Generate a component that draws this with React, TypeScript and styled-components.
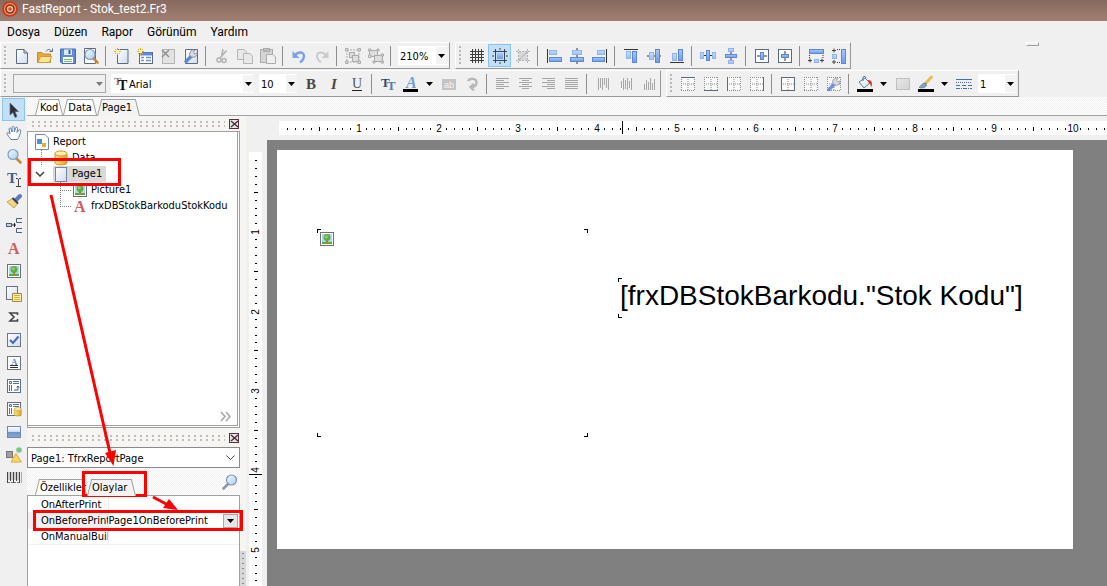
import React from "react";
import styled, { createGlobalStyle, css } from "styled-components";

const UI = `"DejaVu Sans Condensed", "Noto Sans", sans-serif`;

const Global = createGlobalStyle`
  * { box-sizing: border-box; }
  body { margin: 0; background: #f0f0f0; }
  button, select, input { font: inherit; color: inherit; margin: 0; padding: 0; border: 0; background: none; border-radius: 0; }
  svg { display: block; flex: none; }
`;

const dither = css`
  background: repeating-conic-gradient(#ffffff 0 25%, #f0f0f0 0 50%) 0 0 / 2px 2px;
`;

const Window = styled.div`
  position: relative;
  min-height: 100vh;
  display: flex;
  flex-direction: column;
  overflow: hidden;
  background: #f0f0f0;
  color: #000;
  font: 11px/16px ${UI};
`;

const TitleBar = styled.header`
  height: 21px;
  padding: 0 2px 4px;
  display: flex;
  align-items: center;
  gap: 4px;
  background: linear-gradient(#866a5d, #a18072);
  color: #fff;
  font: 12px/16px Roboto, sans-serif;
  white-space: nowrap;
`;

const MenuBar = styled.nav`
  height: 21px;
  padding: 0 7px;
  display: flex;
  align-items: center;
  gap: 14px;
  font: 12px/16px Roboto, sans-serif;
`;

const ToolRows = styled.div`
  display: flex;
  flex-direction: column;
  gap: 1px;
`;

const ToolRow = styled.div`
  display: flex;
  align-items: flex-start;
  gap: 5px;
`;

const Toolbar = styled.div`
  height: 27px;
  display: flex;
  align-items: center;
  border: 1px solid #fff;
  border-right-color: #989898;
  border-bottom-color: #989898;
`;

const Grip = styled.span`
  width: 9px;
  height: 21px;
  background: radial-gradient(circle, #b8b8b8 1px, transparent 1px) 2px 0 / 4px 4px no-repeat;
  background-repeat: repeat-y;
`;

const StubBar = styled.div`
  width: 13px;
  height: 4px;
  margin-left: 170px;
  border: 1px solid #fff;
  border-right-color: #a0a0a0;
  border-bottom-color: #a0a0a0;
`;

const ToolButton = styled.button<{ $active?: boolean; $narrow?: boolean }>`
  width: ${(p) => (p.$narrow ? 15 : 23)}px;
  height: 23px;
  flex: none;
  display: flex;
  align-items: center;
  justify-content: center;
  ${(p) => p.$active && css`background: #c1dff5; border: 1px solid #8ac4ee;`}
`;

const Separator = styled.span`
  width: 8px;
  height: 20px;
  flex: none;
  background: linear-gradient(90deg, transparent 3px, #8c8c8c 3px 4px, transparent 4px);
`;

const Combo = styled.label<{ $w: number; $disabled?: boolean }>`
  width: ${(p) => p.$w}px;
  height: 19px;
  flex: none;
  margin: 0 2px 0 3px;
  padding-left: 2px;
  display: flex;
  align-items: center;
  background: ${(p) => (p.$disabled ? "#f0f0f0" : "#fff")};
  border: ${(p) => (p.$disabled ? "1px solid #a8a8a8" : "0")};
`;

const ComboField = styled.span`
  flex: 1;
  display: grid;
  align-items: center;
  & > * { grid-area: 1 / 1; }
`;

const Select = styled.select`
  appearance: none;
  width: 100%;
  height: 18px;
  padding-top: 2px;
  outline: none;
`;

const ComboArrow = styled.span<{ $plain?: boolean }>`
  width: 11px;
  height: 17px;
  justify-self: end;
  display: flex;
  align-items: center;
  justify-content: center;
  pointer-events: none;
  background: ${(p) => (p.$plain ? "transparent" : "#f3f3f3")};
`;

const Body = styled.div`
  flex: 1;
  display: flex;
  min-height: 0;
`;

const ToolStrip = styled.div`
  width: 27px;
  flex: none;
  padding: 1px 2px;
  display: flex;
  flex-direction: column;
`;

const Main = styled.div`
  flex: 1;
  min-width: 0;
  display: flex;
  flex-direction: column;
`;

const TabBar = styled.div<{ $tall?: boolean }>`
  height: ${(p) => (p.$tall ? 28 : 19)}px;
  flex: none;
  padding: 0 2px 0 8px;
  display: flex;
  align-items: flex-end;
  border-bottom: 1px solid #a0a0a0;
  ${dither}
`;

const Tab = styled.button<{ $active?: boolean; $w?: number }>`
  position: relative;
  isolation: isolate;
  width: ${(p) => (p.$w ? `${p.$w}px` : "auto")};
  height: 17px;
  margin-bottom: -1px;
  padding: 0 ${(p) => (p.$active ? 8 : 5)}px 0 5px;
  line-height: 18px;
  text-align: left;
  white-space: nowrap;
  z-index: ${(p) => (p.$active ? 1 : 0)};
  &::before, &::after {
    content: "";
    position: absolute;
    z-index: -1;
    top: 0;
    bottom: ${(p) => (p.$active ? 0 : 1)}px;
    background: ${(p) => (p.$active ? "#f3f3f3" : "#fff")};
    border-top: 1px solid #a0a0a0;
  }
  &::before {
    left: 0;
    right: 30%;
    border-left: 1px solid #a0a0a0;
    transform-origin: bottom left;
    transform: skewX(-14deg);
  }
  &::after {
    left: 30%;
    right: 0;
    border-right: 1px solid #a0a0a0;
    transform-origin: bottom right;
    transform: skewX(14deg);
  }
`;

const Spacer = styled.span`
  flex: 1;
`;

const Columns = styled.div`
  flex: 1;
  display: flex;
  min-height: 0;
`;

const SidePanel = styled.aside`
  width: 213px;
  flex: none;
  display: flex;
  flex-direction: column;
  background: #f7f5f1;
`;

const DockCaption = styled.div<{ $tall?: boolean }>`
  height: ${(p) => (p.$tall ? 19 : 15)}px;
  flex: none;
  padding: 1px 0 0 3px;
  display: flex;
  align-items: center;
  gap: 4px;
`;

const DockGrip = styled.span`
  flex: 1;
  height: 8px;
  background: radial-gradient(circle, #bdbdbd 1px, transparent 1px) 0 0 / 6px 4px;
`;

const CloseButton = styled.button`
  width: 11px;
  height: 10px;
`;

const TreeBox = styled.div`
  flex: 1;
  display: flex;
  flex-direction: column;
  background: #fff;
  border: 1px solid #a0a0a0;
  border-right: 3px double #a0a0a0;
  border-bottom: 3px double #a0a0a0;
`;

const TreeList = styled.ul`
  flex: 1;
  margin: 0;
  padding: 2px 0 0;
  list-style: none;
`;

const TreeRow = styled.li<{ $indent: number }>`
  height: 16px;
  padding-left: ${(p) => p.$indent}px;
  display: flex;
  align-items: center;
  white-space: nowrap;
`;

const TreeLabel = styled.span<{ $selected?: boolean }>`
  display: flex;
  align-items: center;
  gap: 3px;
  padding-right: 4px;
  background: ${(p) => (p.$selected ? "#d9d9d9" : "transparent")};
`;

const Branch = styled.span<{ $last?: boolean }>`
  width: 12px;
  height: 16px;
  flex: none;
  background:
    linear-gradient(90deg, #808080 1px, transparent 1px) 0 8px / 2px 1px repeat-x,
    linear-gradient(#808080 1px, transparent 1px) 0 0 / 1px 2px repeat-y;
  clip-path: ${(p) => (p.$last ? "inset(0 0 7px 0)" : "none")};
`;

const Expander = styled.button`
  width: 18px;
  height: 16px;
  display: flex;
  align-items: center;
`;

const MoreButton = styled.button`
  align-self: flex-end;
  margin: 0 6px 3px 0;
`;

const ObjectPicker = styled.label`
  height: 21px;
  flex: none;
  padding: 0 3px;
  display: flex;
  background: #fff;
  border: 1px solid #8a8a8a;
`;

const SearchButton = styled.button`
  align-self: center;
`;

const PropertyBox = styled.div`
  height: 90px;
  flex: none;
  padding-top: 1px;
  background: #fff;
  border-left: 1px solid #a0a0a0;
  border-right: 1px solid #a0a0a0;
`;

const PropertyTable = styled.table`
  width: 100%;
  table-layout: fixed;
  border-collapse: collapse;
`;

const PropertyRow = styled.tr<{ $selected?: boolean }>`
  height: 16px;
  box-shadow: inset 0 -1px #f0f0f0;
  & > th { background: ${(p) => (p.$selected ? "#f0f0f0" : "transparent")}; }
`;

const PropertyName = styled.th`
  width: 80px;
  height: 16px;
  padding: 0 0 0 13px;
  border-right: 1px solid #ececec;
  font-weight: normal;
  text-align: left;
  line-height: 16px;
  white-space: nowrap;
  overflow: hidden;
`;

const PropertyValue = styled.td`
  height: 16px;
  padding: 0 1px 0 0;
`;

const ValueEditor = styled.div`
  display: flex;
  height: 16px;
  align-items: center;
`;

const ValueInput = styled.input`
  flex: 1;
  min-width: 0;
  height: 16px;
  outline: none;
`;

const ValueDrop = styled.button`
  width: 15px;
  height: 14px;
  display: flex;
  align-items: center;
  justify-content: center;
  background: #e6e6e6;
  border: 1px solid #a8a8a8;
`;

const Splitter = styled.div`
  width: 6px;
  flex: none;
  display: flex;
  align-items: flex-end;
  background: #f7f5f1;
`;

const SplitterHandle = styled.div`
  width: 6px;
  height: 35px;
  background: radial-gradient(circle, #8a8a8a 1px, transparent 1px) 0 0 / 6px 5px, #d8d8d8;
`;

const Workspace = styled.div`
  flex: 1;
  min-width: 0;
  display: grid;
  grid-template-columns: 21px 1fr;
  grid-template-rows: 24px 1fr;
`;

const TopRuler = styled.div`
  grid-column: 1 / 3;
  padding: 5px 0 0 33px;
`;

const SideRuler = styled.div`
  padding: 12px 5px 0 3px;
`;

const RulerSvg = styled.svg`
  background: #fff;
  overflow: hidden;
  font: 10px "Liberation Sans", sans-serif;
`;

const Desk = styled.div`
  min-width: 0;
  padding: 10px 10px 37px;
  overflow: hidden;
  background: #808080;
`;

const Paper = styled.div`
  position: relative;
  width: 796px;
  height: 399px;
  background: #fff;
`;

const leftCorners = `
  linear-gradient(#000 0 0) 0 0 / 4px 1px no-repeat, linear-gradient(#000 0 0) 0 0 / 1px 4px no-repeat,
  linear-gradient(#000 0 0) 0 100% / 4px 1px no-repeat, linear-gradient(#000 0 0) 0 100% / 1px 4px no-repeat`;
const rightCorners = `
  linear-gradient(#000 0 0) 100% 0 / 4px 1px no-repeat, linear-gradient(#000 0 0) 100% 0 / 1px 4px no-repeat,
  linear-gradient(#000 0 0) 100% 100% / 4px 1px no-repeat, linear-gradient(#000 0 0) 100% 100% / 1px 4px no-repeat`;

const ReportObject = styled.div<{ $x: number; $y: number; $w: number; $h: number; $openRight?: boolean }>`
  position: absolute;
  left: ${(p) => p.$x}px;
  top: ${(p) => p.$y}px;
  width: ${(p) => p.$w}px;
  height: ${(p) => p.$h}px;
  padding: 2px;
  background: ${(p) => (p.$openRight ? leftCorners : `${leftCorners}, ${rightCorners}`)};
  font: 28px/32px "Liberation Sans", Arial, sans-serif;
  white-space: nowrap;
`;

const Markup = styled.svg`
  position: absolute;
  left: 0;
  top: 0;
  pointer-events: none;
`;

const HiddenDefs = styled.svg`
  position: absolute;
`;

const navy = "#5a6b80";
const gray = "#a6a6a6";

const dots = (
  <g>
    <rect x="1" y="1" width="14" height="14" fill="#fafafa" />
    <path d="M1 1.500H15M1 14.500H15M1.500 1V15M14.500 1V15M8 3V14M3 8H14" stroke="#8a8a8a" strokeDasharray="1 1" fill="none" />
  </g>
);
const paper = (
  <path d="M3.500 1.500H14V15.500H3.500Z" fill="url(#paper)" stroke={navy} />
);
const spark = (
  <g stroke="#e3b21c" strokeWidth="1">
    <path d="M3.500 0V7M0 3.500H7M1 1L6 6M6 1L1 6" />
    <rect x="2" y="2" width="3" height="3" fill="#fff3a0" stroke="none" />
  </g>
);
const wrench = (
  <g>
    <path d="M3 13.500L9 7.500" stroke="#5f86d8" strokeWidth="3.400" strokeLinecap="round" />
    <path d="M7.500 8.500A4 4 0 0 1 12 2.200L10.500 4.500L12 6L14.200 4.600A4 4 0 0 1 8.800 9Z" fill="#d5d9de" stroke="#7b8796" strokeWidth=".8" />
  </g>
);
const picture = (
  <g>
    <rect x="1.500" y="1.500" width="13" height="13" fill="#fff" stroke="#707070" />
    <rect x="3" y="3" width="10" height="10" fill="#a9d4f2" />
    <rect x="3" y="11" width="10" height="2" fill="#5faa3c" />
    <path d="M8 8V12" stroke="#b5793a" strokeWidth="2" />
    <circle cx="8" cy="6.500" r="3.400" fill="#5dad42" />
    <circle cx="7.300" cy="5.800" r="1.600" fill="#8fd068" />
  </g>
);
const lens = (
  <g>
    <path d="M10.500 10.500L14.500 14.500" stroke="#c8873f" strokeWidth="2.600" strokeLinecap="round" />
    <circle cx="7" cy="6.500" r="5" fill="url(#glass)" stroke="#7f9bc0" strokeWidth="1.200" />
  </g>
);
const glyphT = (x: number, y: number, size: number, fill: string, t: string, extra: object = {}) => (
  <text x={x} y={y} fontSize={size} fill={fill} fontFamily="Liberation Serif, serif" fontWeight="bold" {...extra}>{t}</text>
);
const lines = (ends: [number, number][]) => (
  <path d={ends.map(([a, b], i) => `M${a} ${2.5 + i * 2}H${b}`).join("")} stroke={gray} />
);
const vbars = (ends: [number, number][]) => (
  <path d={ends.map(([a, b], i) => `M${3.5 + i * 2} ${a}V${b}`).join("")} stroke={gray} />
);
const boxes = (list: number[][]) =>
  list.map((b, i) => (
    <rect key={i} x={b[0] + 0.5} y={b[1] + 0.5} width={b[2] - 1} height={b[3] - 1}
      fill={b[4] ? "url(#blueDark)" : "url(#blueLight)"} stroke={b[4] ? "#5b87d6" : "#8fb3ee"} />
  ));

const icons: Record<string, React.ReactNode> = {
  logo: (
    <g>
      <circle cx="8" cy="8" r="7.800" fill="#c9391a" />
      <circle cx="8" cy="8" r="6" fill="#f0a070" />
      <circle cx="8" cy="8" r="4.800" fill="#8d2b16" />
      <circle cx="8" cy="8" r="3.200" fill="#f3b896" />
      <circle cx="8" cy="8" r="1.800" fill="#d7502a" />
    </g>
  ),
  fresh: <path d="M2.500 1.500H10L13.500 5V15.500H2.500ZM10 1.500V5H13.500" fill="url(#paper)" stroke={navy} />,
  open: (
    <g>
      <path d="M.5 4.500H5L6.500 6H13.500V14.500H.5Z" fill="#e8a93c" stroke="#c98a2b" />
      <path d="M3.500 8.500H14.500L12.500 14.500H1Z" fill="#fde596" stroke="#d59a33" />
      <path d="M9 3.500C11 .5 13.500 1 14.500 3.500M12.500 3.500H15.500V.5" fill="none" stroke="#54708f" />
    </g>
  ),
  save: (
    <g>
      <path d="M.5 1H15.500V15.500H2L.5 14Z" fill="#5b8ddb" stroke="#3f6db5" />
      <rect x="4" y="1.500" width="8" height="5.500" fill="#dfeafa" />
      <path d="M9.500 2V6" stroke="#3564ad" strokeWidth="2" />
      <rect x="3" y="9" width="10" height="6" fill="#fff" />
      <path d="M4 11.500H12M4 13.500H12" stroke="#7fbf5a" />
    </g>
  ),
  preview: <g><path d="M1.500 .5H12.500V15.500H1.500Z" fill="#fff" stroke={navy} />{lens}</g>,
  newPage: <g>{paper}{spark}</g>,
  newDialog: (
    <g>
      <rect x="2.500" y="4.500" width="13" height="11" fill="#fff" stroke={navy} />
      <path d="M3 6H15" stroke="#5b8be0" strokeWidth="3" />
      <path d="M4 9.500H7M4 12.500H7M9 9.500H14M9 12.500H14" stroke="#6e92c8" strokeWidth="1.400" />
      {spark}
    </g>
  ),
  deletePage: (
    <g>
      <rect x="2.500" y="1.500" width="12" height="14" fill="#e2e2e2" stroke="#b5b5b5" />
      <path d="M2 2L9 9M9 2L2 9" stroke="#8c8c8c" strokeWidth="1.400" />
    </g>
  ),
  pageSettings: <g><path d="M2.500 1.500H14.500V15.500H2.500Z" fill="url(#paper)" stroke={navy} />{wrench}</g>,
  cut: (
    <g stroke="#b0b0b0" fill="none" strokeWidth="1.500">
      <path d="M9 1L7.500 9M12.500 2.500L6 10" /><circle cx="5" cy="12" r="2" /><circle cx="10" cy="12.500" r="2" />
    </g>
  ),
  copy: (
    <g fill="#e8e8e8" stroke="#b5b5b5">
      <path d="M.5 1.500H7L9.500 4V11.500H.5Z" /><path d="M6.500 5.500H13L15.500 8V15.500H6.500Z" />
    </g>
  ),
  paste: (
    <g stroke="#acacac">
      <rect x=".5" y="1.500" width="12" height="13" fill="#d4d4d4" /><rect x="3.500" y=".5" width="6" height="3" fill="#bbb" />
      <path d="M6.500 6.500H13L15.500 9V15.500H6.500Z" fill="#efefef" />
    </g>
  ),
  undo: (
    <g>
      <path d="M4 7.500C6 4 13 3 13 8C13 11 11 13 9 14.500" fill="none" stroke="#7ba2e6" strokeWidth="2.400" />
      <path d="M1.500 3V10H8.500Z" fill="#7ba2e6" />
    </g>
  ),
  redo: (
    <g>
      <path d="M12 7.500C10 4 3 3 3 8C3 11 5 13 7 14.500" fill="none" stroke="#cbcbcb" strokeWidth="2" />
      <path d="M14.500 3V10H7.500Z" fill="#cbcbcb" />
    </g>
  ),
  group: (
    <g fill="#dedede" stroke="#ababab">
      <path d="M2 2H14M2 2V14M14 2V14M2 14H14" strokeDasharray="2 1" />
      <rect x="4.500" y="4.500" width="5" height="5" /><rect x="7.500" y="7.500" width="6" height="6" />
      <path d="M.5 .5H3V3H.5ZM13 .5H15.500V3H13ZM.5 13H3V15.500H.5ZM13 13H15.500V15.500H13Z" />
    </g>
  ),
  ungroup: (
    <g fill="#dedede" stroke="#ababab">
      <rect x="1.500" y="2.500" width="8" height="6" /><rect x="6.500" y="7.500" width="8" height="6" />
      <path d="M.5 1H3V3H.5ZM9 1H11V3H9ZM.5 7H3V9.500H.5ZM5 13H7V15H5ZM13 6H15.500V8H13ZM13 13H15.500V15H13Z" />
    </g>
  ),
  grid: <path d="M1 3.500H15M1 6.500H15M1 9.500H15M1 12.500H15M3.500 1V15M6.500 1V15M9.500 1V15M12.500 1V15" stroke="#3d3d3d" />,
  gridAlign: (
    <g>
      <rect x="5" y="5" width="6" height="6" fill="url(#blueDark)" />
      <path d="M1 3.500H15M1 12.500H15M3.500 1V15M12.500 1V15" stroke="#3a4658" />
      <path d="M8 0V2M8 14V16M0 8H2M14 8H16" stroke="#3a4658" />
    </g>
  ),
  fitGrid: (
    <g stroke="#b0b0b0">
      <rect x="4" y="4" width="8" height="8" fill="#d8d8d8" stroke="none" />
      <path d="M1 3.500H15M1 12.500H15M3.500 1V15M12.500 1V15" strokeDasharray="2 1" />
      <path d="M4 12L12 4" />
    </g>
  ),
  alLeft: <g><path d="M1.500 1V15" stroke="#333" />{boxes([[3, 2, 8, 5, 0], [3, 9, 13, 5, 1]])}</g>,
  alCenter: <g><path d="M8 0V16" stroke="#333" />{boxes([[3, 2, 10, 5, 0], [1, 9, 14, 5, 1]])}</g>,
  alRight: <g><path d="M14.500 1V15" stroke="#333" />{boxes([[5, 2, 8, 5, 0], [0, 9, 13, 5, 1]])}</g>,
  alTop: <g><path d="M1 1.500H15" stroke="#333" />{boxes([[3, 3, 5, 8, 0], [9, 3, 5, 12, 1]])}</g>,
  alMiddle: <g><path d="M1 8H15" stroke="#333" />{boxes([[3, 4, 5, 8, 0], [9, 1, 5, 14, 1]])}</g>,
  alBottom: <g><path d="M1 14.500H15" stroke="#333" />{boxes([[3, 5, 5, 8, 0], [9, 1, 5, 12, 1]])}</g>,
  spaceH: <g><path d="M2 7.500H14" stroke="#333" />{boxes([[0, 4, 4, 7, 0], [12, 4, 4, 7, 0], [6, 2, 4, 11, 1]])}</g>,
  spaceV: <g><path d="M8 2V14" stroke="#333" />{boxes([[5, 0, 6, 4, 0], [5, 12, 6, 4, 0], [2, 6, 12, 4, 1]])}</g>,
  centerH: <g><rect x="1.500" y="1.500" width="13" height="13" fill="#fff" stroke={navy} /><path d="M3 8H13" stroke="#333" />{boxes([[6, 4, 4, 8, 1]])}</g>,
  centerV: <g><rect x="1.500" y="1.500" width="13" height="13" fill="#fff" stroke={navy} /><path d="M8 3V13" stroke="#333" />{boxes([[4, 6, 8, 4, 1]])}</g>,
  sameW: <g>{boxes([[1, 1, 15, 5, 1], [6, 11, 5, 4, 0]])}<path d="M1.500 7V10M15 7V10" stroke="#333" strokeDasharray="1 1" /><path d="M0 12.500H4M2 10.500V14.500M12 12.500H16M14 10.500V14.500" stroke="#444" /></g>,
  sameH: <g>{boxes([[10, 1, 5, 15, 1], [1, 6, 5, 5, 0]])}<path d="M6 1.500H10M6 14.500H10" stroke="#333" strokeDasharray="1 1" /><path d="M1 2.500H5M3 .5V4.500M1 14H5M3 12V16" stroke="#444" /></g>,
  fontSmall: <g>{glyphT(1, 9, 11, "#8a8a8a", "T")}{glyphT(5, 14, 14, "#111", "T")}</g>,
  bold: glyphT(3, 13, 15, "#484848", "B"),
  italic: glyphT(5, 13, 15, "#484848", "I", { fontStyle: "italic" }),
  underline: <g>{glyphT(3, 12, 14, "#555", "U", { fontWeight: "normal" })}<path d="M3 14.500H13" stroke="#222" /></g>,
  font: <g>{glyphT(1, 11, 13, "#2c4a6e", "T")}{glyphT(7, 14, 13, "#5b7ca8", "T")}</g>,
  fontColor: <g>{glyphT(3, 12, 16, "#6f9be0", "A", { fontStyle: "italic" })}<path d="M0 14.500H15" stroke="#000" strokeWidth="3" /></g>,
  highlight: <g><rect x="1" y="3" width="14" height="11" fill="#c4c4c4" /><text x="3" y="12" fontSize="9" fill="#f4f4f4" fontFamily="Liberation Sans">ab</text></g>,
  rotate: <path d="M4 5C6 1.500 13 2 12.500 7C12 11 8 11 8 11M10 8L6.500 11L10 14.500" fill="none" stroke="#b8b8b8" strokeWidth="2.400" />,
  tLeft: lines([[1, 14], [1, 9], [1, 14], [1, 9], [1, 14], [1, 9]]),
  tCenter: lines([[1, 14], [4, 11], [1, 14], [4, 11], [1, 14], [4, 11]]),
  tRight: lines([[1, 14], [6, 14], [1, 14], [6, 14], [1, 14], [6, 14]]),
  tJust: lines([[1, 14], [1, 14], [1, 14], [1, 14], [1, 14], [1, 14]]),
  vTop: vbars([[2, 14], [2, 12], [2, 14], [2, 9], [2, 12], [2, 14]]),
  vMid: vbars([[5, 12], [2, 14], [4, 13], [2, 14], [5, 12], [2, 14]]),
  vBot: vbars([[8, 14], [4, 14], [6, 14], [2, 14], [7, 14], [3, 14]]),
  frTop: <g>{dots}<path d="M1 1.500H15" stroke={navy} /></g>,
  frBottom: <g>{dots}<path d="M1 14.500H15" stroke={navy} /></g>,
  frLeft: <g>{dots}<path d="M1.500 1V15" stroke={navy} /></g>,
  frRight: <g>{dots}<path d="M14.500 1V15" stroke={navy} /></g>,
  frAll: <g>{dots}<rect x="1.500" y="1.500" width="13" height="13" fill="none" stroke={navy} /></g>,
  frNone: dots,
  frEdit: <g>{dots}<g opacity=".9">{wrench}</g></g>,
  bucket: (
    <g>
      <path d="M2 6L8 2L13 7L7 12Z" fill="url(#paper)" stroke="#5c7892" />
      <path d="M6 5V1.500C6 0 9 0 9 2" fill="none" stroke="#55708c" />
      <path d="M11 4C15 4 15.500 7 14.500 11C13 9 13.500 7 11 6Z" fill="#d8352a" />
      <path d="M0 14.500H16" stroke="#000" strokeWidth="3" />
    </g>
  ),
  frameStyle: <rect x="1.500" y="2.500" width="13" height="11" fill="url(#grayFill)" stroke="#c0c0c0" />,
  brushColor: (
    <g>
      <path d="M7 8L13.500 1" stroke="#e8bf55" strokeWidth="3" strokeLinecap="round" />
      <path d="M1 11.500C3 10 4 7 7.500 7L8.500 9C8 11.500 4 12.500 1 11.500Z" fill="#7fa3cc" stroke="#56789e" strokeWidth=".8" />
      <path d="M0 14.500H16" stroke="#000" strokeWidth="3" />
    </g>
  ),
  lineStyle: (
    <g stroke="#4a6ca8">
      <path d="M0 3.500H16" /><path d="M0 6.500H16" strokeDasharray="1 1" /><path d="M0 9.500H16" strokeDasharray="4 2" /><path d="M0 12.500H16" strokeDasharray="4 1 1 1" />
    </g>
  ),
  cursor: <path d="M4 1V13L7 10.500L9 15.500L11 14.500L9 9.500H12.500Z" fill="#2e3238" stroke="#5a6068" strokeWidth=".6" />,
  hand: (
    <path d="M5 14.500C3.500 12 1.500 10.500 .8 8.500C1 7 2.500 7.500 4 9L3 4C3.300 2.500 4.800 2.700 5.200 4L6 7L6.200 2.500C6.500 1 8 1 8.300 2.500V7L9.500 3C10 1.700 11.500 2 11.500 3.400L11 7.500L13 5C14 4.200 15 5 14.700 6.200C14 9 13.500 12 11.500 14.500Z"
      fill="#fff" stroke="#5a7ca6" />
  ),
  zoom: lens,
  textEdit: <g>{glyphT(1, 12, 15, "#3f618e", "T")}<path d="M10 7.500H12M13 7.500H15M12.500 8V15M10 15.500H15" stroke="#444" /></g>,
  formatBrush: (
    <g>
      <path d="M10 6L14 2" stroke="#6175c0" strokeWidth="4" strokeLinecap="round" />
      <path d="M1 8L7 4L12 9L8 14Z" fill="#f2d77c" stroke="#b99137" strokeWidth=".8" />
      <path d="M6.500 4L12 9.500" stroke="#2f3f66" strokeWidth="2" />
    </g>
  ),
  band: (
    <g fill="#c3d4e8" stroke="#4c6178">
      <rect x=".5" y="6.500" width="5" height="3" /><path d="M6 8H10M8.500 6V10" stroke="#222" />
      <path d="M16 1.500H10.500V5.500H16M16 11.500H10.500V15.500H16" fill="none" />
    </g>
  ),
  textA: glyphT(2, 13.5, 16, "#cc5f5f", "A"),
  picture,
  subreport: (
    <g>
      <rect x=".5" y=".5" width="11" height="13" fill="url(#paper)" stroke="#69727c" />
      <path d="M6.500 7.500H15.500V15.500H6.500Z" fill="#fff2a6" stroke="#a08a3a" />
      <path d="M8 9.500H14M8 11.500H14M8 13.500H14" stroke="#c9ae4a" />
    </g>
  ),
  sum: <path d="M11.500 6V4H4L8 8L4 12H11.500V10" fill="none" stroke="#444" strokeWidth="1.600" />,
  check: <g><rect x="1.500" y="1.500" width="13" height="13" fill="url(#paper)" stroke="#6d7580" /><path d="M4 8L7 11L12.500 4.500" fill="none" stroke="#4d6cae" strokeWidth="2.200" /></g>,
  rich: (
    <g>
      <rect x="1.500" y="1.500" width="13" height="13" fill="#fff" stroke="#6d7580" />
      {glyphT(5, 10, 9, "#5f8ccc", "A")}<path d="M4 10.500H12M4 12.500H12" stroke="#333" />
    </g>
  ),
  cross: (
    <g fill="none" stroke="#5b7088">
      <rect x="1.500" y="1.500" width="13" height="13" fill="#fff" />
      <path d="M3.500 3.500H5.500V5.500H3.500ZM7 3.500H13M7 5.500H13M3.500 7V13M5.500 7V13" />
      <path d="M8 12H12V8M10.500 9.500L12 8L13.500 9.500" stroke="#3b5b8a" />
    </g>
  ),
  cylinder: (
    <g>
      <path d="M2 3.500V13C2 15.500 14 15.500 14 13V3.500Z" fill="url(#gold)" stroke="#c99b2a" />
      <ellipse cx="8" cy="3.500" rx="6" ry="2.500" fill="#fdf0a8" stroke="#c99b2a" />
    </g>
  ),
  gradient: <g><rect x="1.500" y="2.500" width="13" height="11" fill="url(#sky)" stroke="#6e89ab" /></g>,
  shapes: (
    <g>
      <rect x=".5" y="4.500" width="6" height="6" fill="#a0a0a0" stroke="#777" />
      <circle cx="13" cy="3" r="2.800" fill="#7cc48a" />
      <path d="M10 6.500L15.500 15H5Z" fill="#f7d766" stroke="#dba93a" />
    </g>
  ),
  barcode: (
    <g>
      <path d="M1.500 2V13M4.500 2V11M7.500 2V13M10.500 2V11M13.500 2V13" stroke="#444" />
      <path d="M3 2V10M9 2V10M12 2V10M15.500 2V13M6 2V10" stroke="#999" strokeWidth=".8" />
      <path d="M2 12.500H14" stroke="#777" strokeDasharray="2 1" />
    </g>
  ),
  report: (
    <g>
      <path d="M1.500 .5H11L14.500 4V15.500H1.500Z" fill="#fff" stroke="#7288a0" />
      <rect x="3" y="5" width="5" height="5" fill="#4b93d1" /><rect x="8" y="9" width="4" height="4" fill="#e4ac3d" />
    </g>
  ),
  pageBox: <rect x="2.500" y="1.500" width="11" height="14" fill="url(#paper)" stroke="#7288a0" />,
};
icons.crossDb = (
  <g>
    {icons.cross}
    <g transform="translate(7 6) scale(.6)">{icons.cylinder}</g>
  </g>
);

const Icon = ({ name, size = 16 }: { name: string; size?: number }) => (
  <svg width={size} height={size} viewBox="0 0 16 16" overflow="visible" aria-hidden="true">{icons[name]}</svg>
);

const Triangle = ({ fill = "#000" }: { fill?: string }) => (
  <svg width="7" height="4" viewBox="0 0 7 4" aria-hidden="true"><path d="M0 0H7L3.500 4Z" fill={fill} /></svg>
);

const Tools = ({ spec, active }: { spec: string; active?: string }) => (
  <>
    {spec.split(" ").map((n, i) =>
      n === "|" ? <Separator key={i} /> :
      n === "v" ? <ToolButton key={i} $narrow aria-label="Seçenekler"><Triangle /></ToolButton> :
      <ToolButton key={i} $active={n === active} aria-label={n}><Icon name={n} /></ToolButton>
    )}
  </>
);

const DropDown = ({ w, value, label, disabled, icon }: { w: number; value: string; label: string; disabled?: boolean; icon?: string }) => (
  <Combo $w={w} $disabled={disabled}>
    {icon && <Icon name={icon} />}
    <ComboField>
      <Select aria-label={label} disabled={disabled}><option>{value}</option></Select>
      <ComboArrow $plain={disabled}><Triangle fill={disabled ? "#7a7a7a" : "#000"} /></ComboArrow>
    </ComboField>
  </Combo>
);

const Caption = ({ tall }: { tall?: boolean }) => (
  <DockCaption $tall={tall}>
    <DockGrip />
    <CloseButton aria-label="Kapat">
      <svg width="11" height="10" viewBox="0 0 11 10" aria-hidden="true">
        <rect x=".5" y=".5" width="9" height="9" fill="#e9e4e4" stroke="#5a3040" />
        <path d="M2 2L9 8M9 2L2 8" stroke="#3c2f3a" strokeWidth="1.400" />
      </svg>
    </CloseButton>
  </DockCaption>
);

const CM = 79.35;
const ticks = (count: number) => Array.from({ length: count }, (_, i) => i + 1);

const HorizontalRuler = () => (
  <RulerSvg width="100%" height="14">
    {ticks(239).map((i) => {
      const x = Math.round((i * CM) / 10);
      if (i % 10 === 0) return <text key={i} x={x + 1} y="11" textAnchor="middle">{i / 10}</text>;
      return i % 5 === 0
        ? <rect key={i} x={x} y="6" width="1" height="4" />
        : <rect key={i} x={x} y="7" width="1" height="2" />;
    })}
    <rect x="343" y="0" width="1" height="13" />
  </RulerSvg>
);

const VerticalRuler = () => (
  <RulerSvg width="13" height="100%">
    {ticks(139).map((i) => {
      const y = Math.round((i * CM) / 10);
      if (i % 10 === 0) return <text key={i} transform={`translate(10 ${y + 1}) rotate(-90)`} textAnchor="middle">{i / 10}</text>;
      return i % 5 === 0
        ? <rect key={i} x="5" y={y} width="4" height="1" />
        : <rect key={i} x="6" y={y} width="2" height="1" />;
    })}
    <rect x="0" y="322" width="13" height="1" />
  </RulerSvg>
);

const stripTools = "cursor hand zoom textEdit formatBrush band textA picture subreport sum check rich cross crossDb gradient shapes barcode";

export default function App() {
  return (
    <Window>
      <Global />
      <HiddenDefs width="0" height="0" aria-hidden="true">
        <defs>
          <linearGradient id="paper" x2="1" y2="1"><stop stopColor="#fff" /><stop offset="1" stopColor="#cfdcf0" /></linearGradient>
          <linearGradient id="blueLight" x2="0" y2="1"><stop stopColor="#c6dcff" /><stop offset="1" stopColor="#9dc0f7" /></linearGradient>
          <linearGradient id="blueDark" x2="0" y2="1"><stop stopColor="#a9c8fa" /><stop offset="1" stopColor="#6f9be6" /></linearGradient>
          <linearGradient id="glass" x2="1" y2="1"><stop stopColor="#f4faff" /><stop offset="1" stopColor="#a9cdf2" /></linearGradient>
          <linearGradient id="grayFill" x2="1" y2="1"><stop stopColor="#e8e8e8" /><stop offset="1" stopColor="#d2d2d2" /></linearGradient>
          <linearGradient id="gold" x2="1" y2="0"><stop stopColor="#fbe27a" /><stop offset="1" stopColor="#e0a52c" /></linearGradient>
          <linearGradient id="sky" x2="0" y2="1"><stop stopColor="#fff" /><stop offset=".45" stopColor="#d6e3f3" /><stop offset=".5" stopColor="#6d93c8" /><stop offset="1" stopColor="#88a9d6" /></linearGradient>
        </defs>
      </HiddenDefs>

      <TitleBar><Icon name="logo" />FastReport - Stok_test2.Fr3</TitleBar>
      <MenuBar>
        {["Dosya", "Düzen", "Rapor", "Görünüm", "Yardım"].map((m) => <button key={m}>{m}</button>)}
      </MenuBar>

      <ToolRows>
        <ToolRow>
          <Toolbar>
            <Grip />
            <Tools spec="fresh open save preview | newPage newDialog deletePage pageSettings | cut copy paste | undo redo | group ungroup |" />
            <DropDown w={49} value="210%" label="Yakınlaştırma" />
          </Toolbar>
          <Toolbar>
            <Grip />
            <Tools active="gridAlign" spec="grid gridAlign fitGrid | alLeft alCenter alRight | alTop alMiddle alBottom | spaceH spaceV | centerH centerV | sameW sameH" />
          </Toolbar>
          <StubBar />
        </ToolRow>
        <ToolRow>
          <Toolbar>
            <Grip />
            <DropDown w={93} value="" label="Stil" disabled />
            <DropDown w={143} value="Arial" label="Yazı tipi" icon="fontSmall" />
            <DropDown w={38} value="10" label="Boyut" />
            <Tools spec="bold italic underline | font fontColor v highlight rotate | tLeft tCenter tRight tJust | vTop vMid vBot" />
          </Toolbar>
          <Toolbar>
            <Grip />
            <Tools spec="frTop frBottom frLeft frRight | frAll frNone frEdit | bucket v frameStyle brushColor v lineStyle" />
            <DropDown w={38} value="1" label="Çizgi kalınlığı" />
          </Toolbar>
        </ToolRow>
      </ToolRows>

      <Body>
        <ToolStrip><Tools spec={stripTools} active="cursor" /></ToolStrip>
        <Main>
          <TabBar>
            <Tab>Kod</Tab><Tab>Data</Tab><Tab $active>Page1</Tab>
          </TabBar>
          <Columns>
            <SidePanel>
              <Caption />
              <TreeBox>
                <TreeList>
                  <TreeRow $indent={6}><TreeLabel><Icon name="report" />Report</TreeLabel></TreeRow>
                  <TreeRow $indent={13}><Branch /><TreeLabel><Icon name="cylinder" />Data</TreeLabel></TreeRow>
                  <TreeRow $indent={7}>
                    <Expander aria-label="Daralt">
                      <svg width="10" height="6" viewBox="0 0 10 6"><path d="M1 1L5 5L9 1" fill="none" stroke="#404040" strokeWidth="1.500" /></svg>
                    </Expander>
                    <TreeLabel $selected><Icon name="pageBox" />Page1</TreeLabel>
                  </TreeRow>
                  <TreeRow $indent={32}><Branch /><TreeLabel><Icon name="picture" />Picture1</TreeLabel></TreeRow>
                  <TreeRow $indent={32}><Branch $last /><TreeLabel><Icon name="textA" />frxDBStokBarkoduStokKodu</TreeLabel></TreeRow>
                </TreeList>
                <MoreButton aria-label="Daha fazla">
                  <svg width="11" height="11" viewBox="0 0 11 11"><path d="M1 1L5 5.500L1 10M6 1L10 5.500L6 10" fill="none" stroke="#a8a8a8" strokeWidth="1.600" /></svg>
                </MoreButton>
              </TreeBox>
              <Caption tall />
              <ObjectPicker>
                <ComboField>
                  <Select aria-label="Nesne"><option>Page1: TfrxReportPage</option></Select>
                  <ComboArrow $plain>
                    <svg width="9" height="5" viewBox="0 0 9 5"><path d="M.5 .5L4.500 4.500L8.500 .5" fill="none" stroke="#444" /></svg>
                  </ComboArrow>
                </ComboField>
              </ObjectPicker>
              <TabBar $tall>
                <Tab $w={52}>Özellikler</Tab><Tab $active>Olaylar</Tab>
                <Spacer />
                <SearchButton aria-label="Ara">
                  <svg width="16" height="16" viewBox="0 0 16 16">
                    <path d="M6 10L1.500 14.500" stroke="#8b97ab" strokeWidth="2.500" strokeLinecap="round" />
                    <circle cx="9.500" cy="6" r="5" fill="url(#glass)" stroke="#8094b4" strokeWidth="1.200" />
                  </svg>
                </SearchButton>
              </TabBar>
              <PropertyBox>
                <PropertyTable>
                  <tbody>
                    <PropertyRow><PropertyName scope="row">OnAfterPrint</PropertyName><PropertyValue /></PropertyRow>
                    <PropertyRow $selected>
                      <PropertyName scope="row">OnBeforePrint</PropertyName>
                      <PropertyValue>
                        <ValueEditor>
                          <ValueInput aria-label="OnBeforePrint" defaultValue="Page1OnBeforePrint" />
                          <ValueDrop aria-label="Aç"><Triangle /></ValueDrop>
                        </ValueEditor>
                      </PropertyValue>
                    </PropertyRow>
                    <PropertyRow><PropertyName scope="row">OnManualBuild</PropertyName><PropertyValue /></PropertyRow>
                  </tbody>
                </PropertyTable>
              </PropertyBox>
            </SidePanel>
            <Splitter><SplitterHandle /></Splitter>
            <Workspace>
              <TopRuler><HorizontalRuler /></TopRuler>
              <SideRuler><VerticalRuler /></SideRuler>
              <Desk>
                <Paper>
                  <ReportObject $x={40} $y={79} $w={271} $h={208}><Icon name="picture" /></ReportObject>
                  <ReportObject $x={341} $y={128} $w={440} $h={40} $openRight>[frxDBStokBarkodu."Stok Kodu"]</ReportObject>
                </Paper>
              </Desk>
            </Workspace>
          </Columns>
        </Main>
      </Body>

      <Markup width="260" height="540" aria-hidden="true">
        <g fill="none" stroke="#ff0000" strokeWidth="3">
          <rect x="29.500" y="159.500" width="90" height="25" />
          <rect x="83.500" y="472.500" width="62" height="23" />
          <rect x="34.500" y="511.500" width="207" height="18" />
          <path d="M51 195L110 453M153 497L168 505" />
        </g>
        <path d="M113.500 466L105 453L116 450Z M178 510L163 508L169 499Z" fill="#ff0000" />
      </Markup>
    </Window>
  );
}
